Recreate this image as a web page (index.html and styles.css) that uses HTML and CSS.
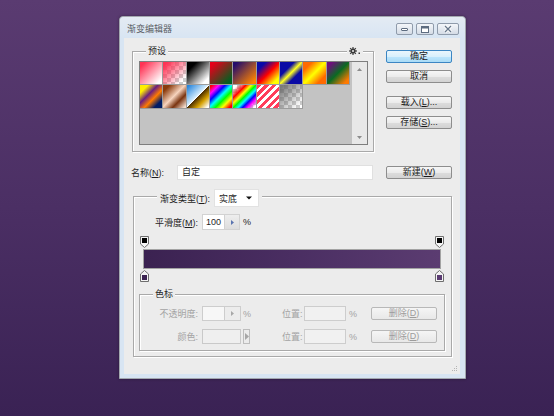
FILE: index.html
```html
<!DOCTYPE html>
<html lang="zh">
<head>
<meta charset="utf-8">
<title>渐变编辑器</title>
<link rel="stylesheet" href="styles.css">
</head>
<body>
<div class="window">
  <div class="titlebar">
    <span class="title">渐变编辑器</span>
    <div class="wbtns">
      <span class="wbtn min"><svg width="9" height="6" viewBox="0 0 9 6"><rect x="1.5" y="2.5" width="6" height="2" rx="0.5" fill="#fff" stroke="#5d6c80"/></svg></span>
      <span class="wbtn max"><svg width="10" height="7" viewBox="0 0 10 7"><rect x="1.5" y="0.5" width="7" height="6" fill="#fff" stroke="#5d6c80"/><rect x="2" y="1" width="6" height="1.5" fill="#5d6c80"/></svg></span>
      <span class="wbtn close"><svg width="10" height="8" viewBox="0 0 10 8"><path d="M2 1 L8 7 M8 1 L2 7" stroke="#fff" stroke-width="3"/><path d="M2 1 L8 7 M8 1 L2 7" stroke="#66768a" stroke-width="1.3"/></svg></span>
    </div>
  </div>
  <div class="client">
    <div class="top">
      <div class="group presets">
        <div class="legend-row">
          <span class="legend">预设</span>
          <span class="gear"><svg width="12" height="8" viewBox="0 0 12 8"><g fill="#3a3a3a"><circle cx="4" cy="4" r="2.5"/><rect x="3.4" y="0" width="1.2" height="8"/><rect x="0" y="3.4" width="8" height="1.2"/><rect x="3.4" y="0" width="1.2" height="8" transform="rotate(45 4 4)"/><rect x="3.4" y="0" width="1.2" height="8" transform="rotate(-45 4 4)"/></g><circle cx="4" cy="4" r="1" fill="#ececec"/><rect x="9.5" y="5.5" width="1.5" height="1.5" fill="#3a3a3a"/></svg></span>
        </div>
        <div class="panel">
          <div class="swatches">
            <div class="sw"></div><div class="sw"></div><div class="sw"></div><div class="sw"></div><div class="sw"></div><div class="sw"></div><div class="sw"></div><div class="sw"></div><div class="sw"></div>
            <div class="sw"></div><div class="sw"></div><div class="sw"></div><div class="sw"></div><div class="sw"></div><div class="sw"></div><div class="sw"></div>
          </div>
          <div class="scroll">
            <svg width="5" height="3" viewBox="0 0 5 3"><path d="M0 3 L2.5 0 L5 3Z" fill="#8c8c8c"/></svg>
            <svg width="5" height="3" viewBox="0 0 5 3"><path d="M0 0 L2.5 3 L5 0Z" fill="#8c8c8c"/></svg>
          </div>
        </div>
      </div>
      <div class="actions">
        <span class="btn primary"><span>确定</span></span>
        <span class="btn"><span>取消</span></span>
        <span class="btn gap"><span>载入(<u>L</u>)...</span></span>
        <span class="btn"><span>存储(<u>S</u>)...</span></span>
      </div>
    </div>

    <div class="name-row">
      <span class="lbl">名称(<u>N</u>):</span>
      <span class="text-input">自定</span>
      <span class="btn"><span>新建(<u>W</u>)</span></span>
    </div>

    <div class="group gradient">
      <div class="legend-row">
        <span class="type">
          <span class="type-lbl">渐变类型(<u>T</u>):</span>
          <span class="select"><span>实底</span><svg width="6" height="4" viewBox="0 0 6 4"><path d="M0 0.5 L6 0.5 L3 3.5Z" fill="#111"/></svg></span>
        </span>
      </div>
      <div class="smooth-row">
        <span class="lbl">平滑度(<u>M</u>):</span>
        <span class="spin"><span class="val">100</span><span class="arr"><svg width="3" height="5" viewBox="0 0 3 5"><path d="M0 0 L3 2.5 L0 5Z" fill="#5a74b0"/></svg></span></span>
        <span class="unit">%</span>
      </div>
      <div class="bar-wrap">
        <div class="stop-row">
          <svg class="stop l" width="9" height="12" viewBox="0 0 9 12"><path d="M0.5 0.5 H8.5 V8 L4.5 11.5 L0.5 8Z" fill="#f4f4f4" stroke="#6e6e6e"/><rect x="2" y="2" width="5" height="5" fill="#000"/></svg>
          <svg class="stop r" width="9" height="12" viewBox="0 0 9 12"><path d="M0.5 0.5 H8.5 V8 L4.5 11.5 L0.5 8Z" fill="#f4f4f4" stroke="#6e6e6e"/><rect x="2" y="2" width="5" height="5" fill="#000"/></svg>
        </div>
        <div class="bar"></div>
        <div class="stop-row">
          <svg class="stop l" width="9" height="12" viewBox="0 0 9 12"><path d="M4.5 0.5 L8.5 4 V11.5 H0.5 V4Z" fill="#f4f4f4" stroke="#6e6e6e"/><rect x="2" y="5" width="5" height="5" fill="#3c2352"/></svg>
          <svg class="stop r" width="9" height="12" viewBox="0 0 9 12"><path d="M4.5 0.5 L8.5 4 V11.5 H0.5 V4Z" fill="#f4f4f4" stroke="#6e6e6e"/><rect x="2" y="5" width="5" height="5" fill="#5b3c72"/></svg>
        </div>
      </div>

      <div class="group stops">
        <div class="legend-row">
          <span class="legend">色标</span>
        </div>
        <div class="srow r1">
          <span class="lbl">不透明度:</span>
          <span class="ctrl">
            <span class="spin off"><span class="val"></span><span class="arr"><svg width="3" height="5" viewBox="0 0 3 5"><path d="M0 0 L3 2.5 L0 5Z" fill="#a8a8a8"/></svg></span></span>
            <span class="unit">%</span>
          </span>
          <span class="lbl2">位置:</span>
          <span class="field"></span>
          <span class="unit2">%</span>
          <span class="btn off"><span>删除(<u>D</u>)</span></span>
        </div>
        <div class="srow r2">
          <span class="lbl">颜色:</span>
          <span class="ctrl">
            <span class="colorbox"></span>
            <span class="colorarr"><svg width="4" height="7" viewBox="0 0 4 7"><path d="M0 0 L4 3.5 L0 7Z" fill="#a6a6a6"/></svg></span>
          </span>
          <span class="lbl2">位置:</span>
          <span class="field"></span>
          <span class="unit2">%</span>
          <span class="btn off"><span>删除(<u>D</u>)</span></span>
        </div>
      </div>
    </div>

    <div class="grip"><svg width="7" height="7" viewBox="0 0 7 7"><g fill="#b4b4b4"><rect x="5" y="1" width="1" height="1"/><rect x="3" y="3" width="1" height="1"/><rect x="5" y="3" width="1" height="1"/><rect x="1" y="5" width="1" height="1"/><rect x="3" y="5" width="1" height="1"/><rect x="5" y="5" width="1" height="1"/></g></svg></div>
  </div>
</div>
</body>
</html>
```

FILE: styles.css
```css
* { box-sizing: border-box; }
html, body { margin: 0; height: 100%; }
body {
  background: linear-gradient(180deg, #5a3b71 0%, #4b2f64 50%, #3a2254 100%);
  font-family: "Liberation Sans", "Noto Sans CJK SC", sans-serif;
  font-size: 9px;
  color: #1f1f1f;
  padding: 16px 0 0 119px;
  overflow: hidden;
}
u { text-decoration: underline; text-underline-offset: 1px; }
svg { display: block; }

.window {
  width: 347px;
  height: 363px;
  border: 1px solid #a3a8af;
  border-radius: 4px 4px 0 0;
  background: #d8e5f3;
  display: flex;
  flex-direction: column;
  box-shadow: 0 0 3px rgba(0, 0, 0, .35);
}
.titlebar {
  height: 21px;
  flex: none;
  display: flex;
  align-items: flex-start;
  padding: 6px 6px 0 7px;
  background: linear-gradient(#e4ebf3, #d8e5f3);
  border-radius: 4px 4px 0 0;
}
.title { flex: 1; line-height: 12px; color: #5b5f66; }
.wbtns { display: flex; gap: 3px; }
.wbtn {
  height: 12px;
  border: 1px solid #8f9bab;
  border-radius: 2px;
  background: linear-gradient(#f3f6fa, #d5dce6);
  display: flex;
  align-items: center;
  justify-content: center;
}
.wbtn.min { width: 17px; }
.wbtn.max { width: 18px; }
.wbtn.close { width: 22px; }

.client {
  flex: 1;
  margin: 0 5px 4px 4px;
  background: #ececec;
  display: flex;
  flex-direction: column;
}

.group {
  border: 1px solid #a9a9a9;
  box-shadow: inset 1px 1px 0 #fff, 1px 1px 0 #fff;
}
.legend-row {
  display: flex;
  align-items: center;
  justify-content: space-between;
  height: 10px;
  margin-top: -6px;
}
.legend { background: #ececec; padding: 0 2px; line-height: 10px; margin-left: 13px; }

.top { display: flex; align-items: flex-start; margin-top: 12px; }
.presets { width: 242px; height: 101px; margin: 1px 0 0 8px; }
.gear { background: #ececec; padding: 0 2px; margin-right: 10px; }

.panel {
  display: flex;
  width: 229px;
  height: 84px;
  margin: 5px 0 0 6px;
  border: 1px solid #7e7e7e;
  background: #c3c3c3;
}
.swatches {
  width: 212px;
  display: grid;
  grid-template-columns: repeat(9, 23.33px);
  grid-auto-rows: 23.33px;
  align-content: start;
}
.sw { border-right: 1px solid #9c9c9c; border-bottom: 1px solid #9c9c9c; }
.sw:nth-child(1) { background: linear-gradient(135deg, #ff3355 12%, #ffffff 88%); }
.sw:nth-child(2) { background: linear-gradient(135deg, rgba(255,51,85,1) 10%, rgba(255,51,85,0) 85%), conic-gradient(#cdcdcd 25%, #fff 0 50%, #cdcdcd 0 75%, #fff 0) 0 0 / 8px 8px; }
.sw:nth-child(3) { background: linear-gradient(135deg, #000 22%, #fff 85%); }
.sw:nth-child(4) { background: linear-gradient(135deg, #e4001a 12%, #006020 88%); }
.sw:nth-child(5) { background: linear-gradient(135deg, #230c6c 10%, #ff8400 90%); }
.sw:nth-child(6) { background: linear-gradient(135deg, #0a0aa8 20%, #ff0000 52%, #ffff00 85%); }
.sw:nth-child(7) { background: linear-gradient(135deg, #0a0aa5 32%, #ffff20 50%, #0a0aa5 68%); }
.sw:nth-child(8) { background: linear-gradient(135deg, #ff6a00 20%, #ffff00 50%, #ff6a00 80%); }
.sw:nth-child(9) { background: linear-gradient(135deg, #6e0e7c 12%, #0a6a22 50%, #ff7a00 88%); }
.sw:nth-child(10) { background: linear-gradient(135deg, #ffee00 18%, #6a1f80 40%, #ff7a00 60%, #001c66 82%); }
.sw:nth-child(11) { background: linear-gradient(135deg, #8a3a0c 15%, #f6d4be 48%, #7a3410 70%, #f2dccd 95%); }
.sw:nth-child(12) { background: linear-gradient(135deg, #2886dc 5%, #cfe9fb 45%, #ffffff 49.5%, #4b2d00 50.5%, #d6a000 72%, #ffffff 95%); }
.sw:nth-child(13) { background: linear-gradient(135deg, #ff0000 5%, #ff00ff 20%, #0000ff 34%, #00ffff 48%, #00ff00 62%, #ffff00 77%, #ff0000 93%); }
.sw:nth-child(14) { background: linear-gradient(135deg, rgba(255,0,0,0) 10%, #ff0000 28%, #ffff00 40%, #00ff00 50%, #00ffff 60%, #0000ff 70%, #ff00ff 80%, rgba(255,0,255,0) 94%), conic-gradient(#cdcdcd 25%, #fff 0 50%, #cdcdcd 0 75%, #fff 0) 0 0 / 8px 8px; }
.sw:nth-child(15) { background: repeating-linear-gradient(135deg, #ff3d5a 0 3px, #ffffff 3px 5.5px); }
.sw:nth-child(16) { background: linear-gradient(135deg, rgba(100,100,100,.85) 8%, rgba(100,100,100,0) 90%), conic-gradient(#cdcdcd 25%, #fff 0 50%, #cdcdcd 0 75%, #fff 0) 0 0 / 8px 8px; }

.scroll {
  width: 15px;
  margin-left: auto;
  background: #e8e8e8;
  display: flex;
  flex-direction: column;
  justify-content: space-between;
  align-items: center;
  padding: 6px 0 5px;
}

.btn {
  height: 13px;
  flex: none;
  display: flex;
  align-items: center;
  justify-content: center;
  border: 1px solid #8d8d8d;
  border-radius: 2px;
  background: linear-gradient(#f6f6f6 0%, #ebebeb 50%, #dddddd 51%, #d2d2d2 100%);
  color: #1a1a1a;
  line-height: 1;
  white-space: nowrap;
}
.btn.primary {
  border-color: #3c86c3;
  background: linear-gradient(#eaf6fd 0%, #d9f0fc 50%, #bee6fd 51%, #a9dbf6 100%);
}
.actions { width: 66px; margin-left: 12px; display: flex; flex-direction: column; }
.actions .btn + .btn { margin-top: 7px; }
.actions .btn.gap { margin-top: 13px; }

.name-row { display: flex; align-items: center; height: 15px; margin-top: 13px; }
.name-row .lbl { width: 46px; margin-left: 7px; white-space: nowrap; }
.text-input {
  width: 196px;
  height: 15px;
  background: #fff;
  border: 1px solid #e0e0e0;
  padding-left: 4px;
  line-height: 13px;
}
.name-row .btn { width: 66px; margin-left: 13px; }

.gradient { width: 319px; margin: 16px 0 0 9px; padding-bottom: 5px; }
.gradient > .legend-row { height: 18px; margin-top: -8px; justify-content: flex-start; }
.type {
  margin-left: 23px;
  padding: 0 3px;
  height: 18px;
  display: flex;
  align-items: center;
  gap: 4px;
  background: #ececec;
}
.type-lbl { white-space: nowrap; }
.select {
  width: 45px;
  height: 18px;
  background: #fff;
  border: 1px solid #e2e2e2;
  display: flex;
  align-items: center;
  justify-content: space-between;
  padding: 0 6px 0 4px;
}

.smooth-row { display: flex; align-items: center; height: 16px; margin: 7px 0 0 21px; }
.smooth-row .lbl { width: 47px; white-space: nowrap; }
.spin { display: flex; width: 38px; height: 16px; border: 1px solid #d2d2d2; background: #fff; }
.spin .val { width: 21px; padding-left: 3px; line-height: 14px; }
.spin .arr {
  flex: 1;
  background: linear-gradient(#eeeeee, #dddddd);
  border-left: 1px solid #d2d2d2;
  display: flex;
  align-items: center;
  justify-content: center;
}
.unit { margin-left: 3px; }

.bar-wrap { width: 298px; margin: 6px 0 0 9px; }
.stop-row { position: relative; height: 12px; }
.stop { position: absolute; top: 0; }
.stop.l { left: -3px; }
.stop.r { right: -3px; }
.bar {
  height: 20px;
  margin: 1px 0;
  border: 1px solid #a3a3a3;
  background: linear-gradient(90deg, #3b2251 0%, #4a2e62 50%, #5b3c71 100%);
}

.stops { width: 306px; margin: 12px 0 0 5px; padding-bottom: 6px; }
.stops > .legend-row { justify-content: flex-start; }
.stops .legend { color: #1f1f1f; }
.srow { display: flex; align-items: center; height: 15px; color: #a3a3a3; white-space: nowrap; }
.srow.r1 { margin-top: 7px; }
.srow.r2 { margin-top: 8px; }
.srow .lbl { width: 58px; text-align: right; margin-right: 4px; flex: none; }
.ctrl { width: 51px; display: flex; align-items: center; flex: none; }
.spin.off { width: 39px; height: 15px; border-color: #cdcdcd; }
.spin.off .val { background: #f7f7f7; }
.spin.off .arr { background: #ececec; border-left-color: #cdcdcd; }
.ctrl .unit { margin-left: 2px; }
.colorbox { width: 39px; height: 15px; border: 1px solid #c9c9c9; background: #efefef; }
.colorarr {
  width: 7px;
  height: 15px;
  margin-left: 2px;
  border: 1px solid #bdbdbd;
  background: #ebebeb;
  display: flex;
  align-items: center;
  justify-content: center;
}
.lbl2 { width: 22px; margin-left: 29px; flex: none; }
.field { width: 42px; height: 15px; flex: none; border: 1px solid #cdcdcd; background: #f1f1f1; }
.unit2 { width: 7px; margin-left: 3px; flex: none; }
.btn.off {
  width: 66px;
  margin-left: 15px;
  border-color: #b8b8b8;
  background: linear-gradient(#f5f5f5, #e8e8e8);
  color: #9c9c9c;
}

.grip { margin-top: auto; align-self: flex-end; margin-right: 2px; margin-bottom: 2px; }
```
